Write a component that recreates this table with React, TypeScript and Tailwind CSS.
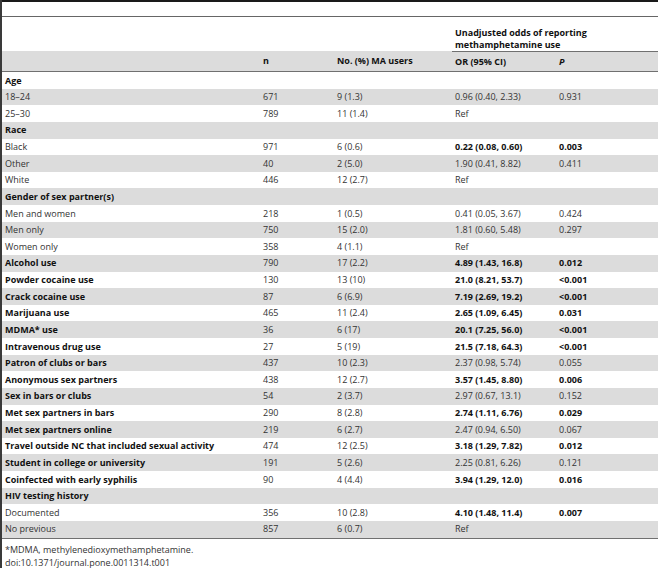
import React from 'react';

type Row = {
  label: string;
  n?: string;
  ma?: string;
  or?: string;
  p?: string;
  head?: boolean; // bold label (section title or variable)
  sig?: boolean; // bold OR and P
};

const rows: Row[] = [
  { label: 'Age', head: true },
  { label: '18–24', n: '671', ma: '9 (1.3)', or: '0.96 (0.40, 2.33)', p: '0.931' },
  { label: '25–30', n: '789', ma: '11 (1.4)', or: 'Ref' },
  { label: 'Race', head: true },
  { label: 'Black', n: '971', ma: '6 (0.6)', or: '0.22 (0.08, 0.60)', p: '0.003', sig: true },
  { label: 'Other', n: '40', ma: '2 (5.0)', or: '1.90 (0.41, 8.82)', p: '0.411' },
  { label: 'White', n: '446', ma: '12 (2.7)', or: 'Ref' },
  { label: 'Gender of sex partner(s)', head: true },
  { label: 'Men and women', n: '218', ma: '1 (0.5)', or: '0.41 (0.05, 3.67)', p: '0.424' },
  { label: 'Men only', n: '750', ma: '15 (2.0)', or: '1.81 (0.60, 5.48)', p: '0.297' },
  { label: 'Women only', n: '358', ma: '4 (1.1)', or: 'Ref' },
  { label: 'Alcohol use', head: true, n: '790', ma: '17 (2.2)', or: '4.89 (1.43, 16.8)', p: '0.012', sig: true },
  { label: 'Powder cocaine use', head: true, n: '130', ma: '13 (10)', or: '21.0 (8.21, 53.7)', p: '<0.001', sig: true },
  { label: 'Crack cocaine use', head: true, n: '87', ma: '6 (6.9)', or: '7.19 (2.69, 19.2)', p: '<0.001', sig: true },
  { label: 'Marijuana use', head: true, n: '465', ma: '11 (2.4)', or: '2.65 (1.09, 6.45)', p: '0.031', sig: true },
  { label: 'MDMA* use', head: true, n: '36', ma: '6 (17)', or: '20.1 (7.25, 56.0)', p: '<0.001', sig: true },
  { label: 'Intravenous drug use', head: true, n: '27', ma: '5 (19)', or: '21.5 (7.18, 64.3)', p: '<0.001', sig: true },
  { label: 'Patron of clubs or bars', head: true, n: '437', ma: '10 (2.3)', or: '2.37 (0.98, 5.74)', p: '0.055' },
  { label: 'Anonymous sex partners', head: true, n: '438', ma: '12 (2.7)', or: '3.57 (1.45, 8.80)', p: '0.006', sig: true },
  { label: 'Sex in bars or clubs', head: true, n: '54', ma: '2 (3.7)', or: '2.97 (0.67, 13.1)', p: '0.152' },
  { label: 'Met sex partners in bars', head: true, n: '290', ma: '8 (2.8)', or: '2.74 (1.11, 6.76)', p: '0.029', sig: true },
  { label: 'Met sex partners online', head: true, n: '219', ma: '6 (2.7)', or: '2.47 (0.94, 6.50)', p: '0.067' },
  { label: 'Travel outside NC that included sexual activity', head: true, n: '474', ma: '12 (2.5)', or: '3.18 (1.29, 7.82)', p: '0.012', sig: true },
  { label: 'Student in college or university', head: true, n: '191', ma: '5 (2.6)', or: '2.25 (0.81, 6.26)', p: '0.121' },
  { label: 'Coinfected with early syphilis', head: true, n: '90', ma: '4 (4.4)', or: '3.94 (1.29, 12.0)', p: '0.016', sig: true },
  { label: 'HIV testing history', head: true },
  { label: 'Documented', n: '356', ma: '10 (2.8)', or: '4.10 (1.48, 11.4)', p: '0.007', sig: true },
  { label: 'No previous', n: '857', ma: '6 (0.7)', or: 'Ref' },
];

const cols = 'grid grid-cols-[258px_74px_118px_104px_1fr]';

export default function App() {
  return (
    <div className="w-[658px] h-[568px] bg-white overflow-hidden border-l-2 border-[#3a3a3a] text-[9px] text-[#333] font-['Open_Sans',sans-serif]">
      {/* rules above the header */}
      <div className="h-[16px] border-t-2 border-[#1a1a1a]" />
      <div className="h-px bg-[#666]" />

      {/* spanning header */}
      <div className={`${cols} h-[34px]`}>
        <div />
        <div />
        <div />
        <div className="col-span-2 pl-[3px] pt-[10px] leading-[12px] font-bold text-[#111]">
          Unadjusted odds of reporting
          <br />
          methamphetamine use
        </div>
      </div>

      {/* column header */}
      <div className={`${cols} h-[21px] bg-[#dcdcdc] border-b border-[#707070] font-bold text-[#111] items-center`}>
        <div />
        <div className="pl-[3px]">n</div>
        <div className="pl-[3px]">No. (%) MA users</div>
        <div className="col-span-2 grid grid-cols-[104px_1fr] h-full items-center border-t border-[#707070] bg-[#dcdcdc]">
          <div className="pl-[3px]">OR (95% CI)</div>
          <div className="pl-[3px] italic">P</div>
        </div>
      </div>

      {/* body */}
      <div className="border-b border-[#707070]">
        {rows.map((r, i) => (
          <div
            key={r.label}
            className={`${cols} h-[16.63px] items-center ${i % 2 === 1 ? 'bg-[#dcdcdc]' : 'bg-white'}`}
          >
            <div className={`pl-[3px] whitespace-nowrap ${r.head ? 'font-bold text-[#111]' : ''}`}>{r.label}</div>
            <div className="pl-[3px]">{r.n}</div>
            <div className="pl-[3px]">{r.ma}</div>
            <div className={`pl-[3px] ${r.sig ? 'font-bold text-[#111]' : ''}`}>{r.or}</div>
            <div className={`pl-[3px] ${r.sig ? 'font-bold text-[#111]' : ''}`}>{r.p}</div>
          </div>
        ))}
      </div>

      {/* footnotes */}
      <div className="pl-[3px] pt-[4px] leading-[13px]">
        <p>*MDMA, methylenedioxymethamphetamine.</p>
        <p>doi:10.1371/journal.pone.0011314.t001</p>
      </div>
    </div>
  );
}
